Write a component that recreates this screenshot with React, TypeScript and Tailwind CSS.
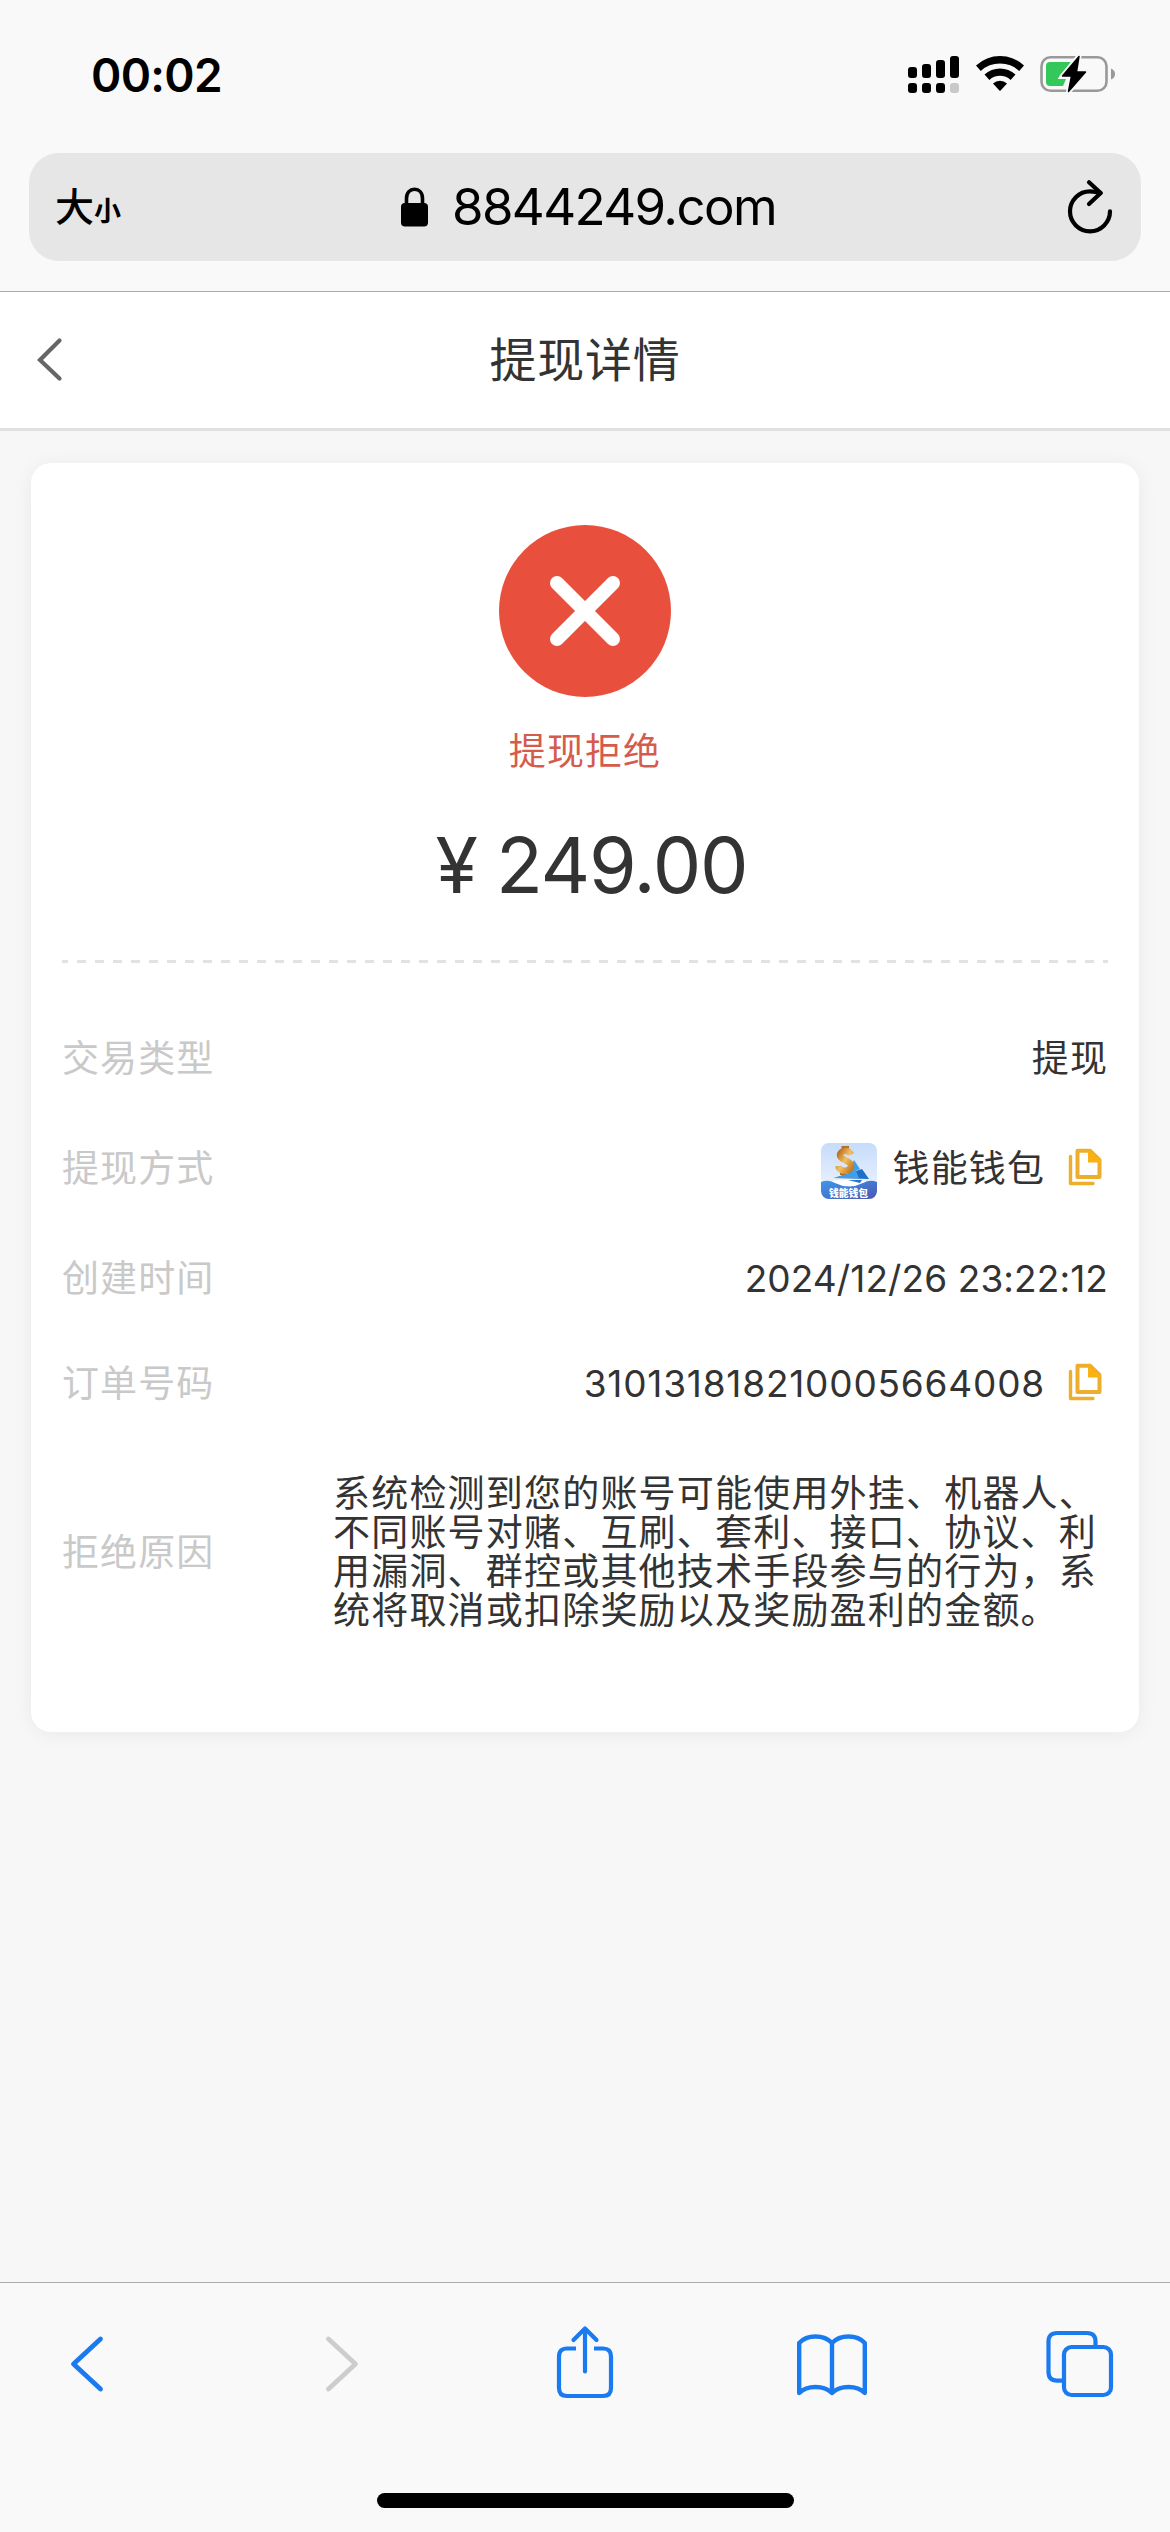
import type { ReactNode } from "react";

function StatusBar() {
  return (
    <div className="flex h-[153px] items-start justify-between pr-[54px] pl-[91px]">
      <div className="mt-[50px] text-[46px] leading-[50px] font-semibold tracking-[-0.700px] text-black">00:02</div>
      <div className="mt-[54px] flex items-start">
        <svg width="52" height="40" viewBox="0 0 52 40" className="mr-[15px]">
          <rect x="0" y="13" width="9" height="11" rx="3" />
          <rect x="14" y="10" width="9" height="14" rx="3" />
          <rect x="28" y="6" width="9" height="18" rx="3" />
          <rect x="42" y="2" width="9" height="22" rx="3" />
          <rect x="0" y="29" width="9" height="10" rx="3" />
          <rect x="14" y="29" width="9" height="10" rx="3" />
          <rect x="28" y="29" width="9" height="10" rx="3" />
          <rect x="42" y="29" width="9" height="10" rx="3" fill="#c8c8c8" />
        </svg>
        <svg width="50" height="40" viewBox="0 0 50 40" className="mr-[15px]">
          <path d="M1 11.5A35 35 0 0 1 49 11.5L44.2 17A28 28 0 0 0 5.8 17Z" strokeLinejoin="round" />
          <path d="M9.5 20.5A23 23 0 0 1 40.5 20.5L35.6 26A15.500 15.500 0 0 0 14.400 26Z" />
          <path d="M18 29.500A10.500 10.500 0 0 1 32 29.500L25.600 36.400Q25 37 24.400 36.400Z" />
        </svg>
        <svg width="76" height="40" viewBox="0 0 76 40">
          <rect x="1.500" y="3.300" width="65" height="33.500" rx="9" fill="none" stroke="#999" strokeWidth="2.600" />
          <path d="M71 14.500Q75 16 75 20T71 25.500Z" fill="#999" />
          <path d="M10 8H31L17.500 25H26L23 32H10Q6 32 6 28V12Q6 8 10 8Z" fill="#34c759" />
          <path d="M39 2L22 22.500H31.500L28.500 38L46 17.500H36.500Z" fill="#000" stroke="#f9f9f9" strokeWidth="5" strokeLinejoin="round" />
          <path d="M39 2.500L22.500 22H31.500L28.500 37.500L45.500 18H36.500Z" stroke="#000" strokeWidth="1.500" strokeLinejoin="round" />
        </svg>
      </div>
    </div>
  );
}

function AddressBar() {
  return (
    <div className="flex h-[138px] items-start px-[29px]">
      <div className="flex h-[108px] w-full items-center justify-between rounded-[30px] bg-[#e6e6e6] text-black">
        <div className="flex w-[160px] items-baseline pt-[5px] pl-[26px]">
          <span className="text-[39px] leading-[52px] font-medium">大</span>
          <span className="text-[27px] leading-[52px] font-bold">小</span>
        </div>
        <div className="flex items-center pl-[7px]">
          <svg width="28" height="40" viewBox="0 0 28 40" className="mr-[23px]">
            <rect x="0" y="16" width="27" height="23.500" rx="4" />
            <path d="M5.500 18V11.500C5.500 5.500 9 2.300 13.500 2.300S21.500 5.500 21.500 11.500V18" fill="none" stroke="#000" strokeWidth="3.600" />
          </svg>
          <span className="text-[51px] leading-[60px] tracking-[-1.600px]">8844249.com</span>
        </div>
        <div className="flex w-[160px] justify-end pr-[27px]">
          <svg width="48" height="56" viewBox="0 0 48 56" fill="none" stroke="#000" strokeWidth="4.200" strokeLinecap="round" strokeLinejoin="round">
            <path d="M44 32.300A20 20 0 1 1 24 12.300Q29 12.300 34.500 14" />
            <path d="M23 3.300L34.700 14L23 25" />
          </svg>
        </div>
      </div>
    </div>
  );
}

function PageHeader() {
  return (
    <header className="grid h-[140px] grid-cols-[1fr_auto_1fr] items-center border-t border-b-[3px] border-t-[#ababab] border-b-[#e1e1e1] bg-white">
      <svg width="28" height="46" viewBox="0 0 28 46" className="ml-[36px]" fill="none" stroke="#666" strokeWidth="4.200" strokeLinecap="round">
        <path d="M23.500 3.500L4 23L23.500 41.500" />
      </svg>
      <h1 className="text-[47px] leading-[60px] tracking-[0.7px] text-[#333]">提现详情</h1>
    </header>
  );
}

function CopyIcon() {
  return (
    <svg width="36" height="40" viewBox="0 0 36 40" className="mr-[5px] mb-[3px] ml-[22px] shrink-0" fill="none">
      <path d="M3.500 9.500V36.500H26" stroke="#ecae2c" strokeWidth="3.400" strokeLinecap="round" strokeLinejoin="round" />
      <path d="M10.500 3.700H23L32.500 13V30H10.500Z" stroke="#ecae2c" strokeWidth="4" strokeLinejoin="round" />
      <path d="M21 2.500L34 14.500V15.500H21Z" fill="#fbb013" />
    </svg>
  );
}

function WalletLogo() {
  return (
    <svg width="56" height="56" viewBox="0 0 56 56" className="mt-[5px] mr-[16px] shrink-0">
      <defs>
        <linearGradient id="sky" x1="0" y1="0" x2="0" y2="1">
          <stop offset="0" stopColor="#c5dcfa" />
          <stop offset="1" stopColor="#f4f8ff" />
        </linearGradient>
        <linearGradient id="sea" x1="0" y1="0" x2="1" y2="1">
          <stop offset="0" stopColor="#3d97ea" />
          <stop offset="1" stopColor="#4c56b4" />
        </linearGradient>
        <linearGradient id="gold" x1="0" y1="0" x2="1" y2="1">
          <stop offset="0" stopColor="#b96a1c" />
          <stop offset="0.500" stopColor="#f3bf62" />
          <stop offset="1" stopColor="#c57a22" />
        </linearGradient>
        <clipPath id="tile">
          <rect width="56" height="56" rx="8" />
        </clipPath>
      </defs>
      <g clipPath="url(#tile)">
        <rect width="56" height="56" fill="url(#sky)" />
        <path d="M33 17L39 26L27 31Z" fill="#3fa0e6" />
        <path d="M13 35L41 26L48 36Z" fill="#1f6fca" />
        <path d="M13 35L35 28L38 35Z" fill="#3fa0e6" />
        <path d="M4 39Q28 34 52 39L40 43H16Z" fill="#fff" />
        <path d="M27 37H41L39 40Z" fill="#2b74c9" />
        <path d="M0 39Q7 36 14 40Q28 47 42 40Q49 36 56 39V56H0Z" fill="url(#sea)" />
        <path d="M20.500 3H28V8H20.500ZM19 26H25V32H19Z" fill="#b56c24" />
        <path d="M30 11.500C28 6.500 19.500 7 19 12C18.500 17.500 30.500 17 30 23C29.500 29 18 29.500 17.500 23" fill="none" stroke="url(#gold)" strokeWidth="6.500" />
        <text x="27.500" y="53.500" textAnchor="middle" fontSize="9.800" fontWeight="900" fill="#fff">钱能钱包</text>
      </g>
    </svg>
  );
}

function Row({ label, height, children }: { label: string; height: string; children: ReactNode }) {
  return (
    <div className={`flex items-center justify-between ${height}`}>
      <div className="shrink-0 tracking-[1.1px] text-[#c9c9c9]">{label}</div>
      <div className="flex items-center text-[#333]">{children}</div>
    </div>
  );
}

function DetailCard() {
  return (
    <section className="mx-[31px] mt-[32px] flex h-[1269px] flex-col rounded-[20px] bg-white px-[31px] text-[37px] leading-[39px] shadow-[0_2px_20px_rgba(0,0,0,0.06)]">
      <div className="flex h-[497px] flex-col items-center pt-[62px]">
        <svg width="172" height="172" viewBox="0 0 172 172">
          <circle cx="86" cy="86" r="86" fill="#e94f3d" />
          <path d="M58 58L114 114M114 58L58 114" stroke="#fff" strokeWidth="14" strokeLinecap="round" />
        </svg>
        <div className="mt-[35px] tracking-[1.1px] text-[#d55c4c]">提现拒绝</div>
        <div className="mt-[44px] ml-[13px] flex items-center text-[77px] leading-[100px] text-[#333]">
          <span>¥</span>
          <span className="ml-[18px] tracking-[-1.200px]">249.00</span>
        </div>
      </div>
      <div className="h-[3px] shrink-0 bg-[repeating-linear-gradient(90deg,#e2e2e2_0_6px,transparent_6px_15px,#e2e2e2_15px_18px)]" />
      <div className="mt-[40px] flex flex-col">
        <Row label="交易类型" height="h-[110px]">
          <span className="tracking-[1.1px]">提现</span>
        </Row>
        <Row label="提现方式" height="h-[111px]">
          <WalletLogo />
          <span className="tracking-[1.1px]">钱能钱包</span>
          <CopyIcon />
        </Row>
        <Row label="创建时间" height="h-[109px]">
          <span className="tracking-[0.100px]">2024/12/26 23:22:12</span>
        </Row>
        <Row label="订单号码" height="h-[100px]">
          <span className="tracking-[0.800px]">310131818210005664008</span>
          <CopyIcon />
        </Row>
        <Row label="拒绝原因" height="h-[238px]">
          <p className="w-[775px] tracking-[1.200px]">
            系统检测到您的账号可能使用外挂、机器人、
            <br />
            不同账号对赌、互刷、套利、接口、协议、利
            <br />
            用漏洞、群控或其他技术手段参与的行为，系
            <br />
            统将取消或扣除奖励以及奖励盈利的金额。
          </p>
        </Row>
      </div>
    </section>
  );
}

function Toolbar() {
  return (
    <nav className="flex h-[250px] flex-col items-center justify-between border-t border-[#ababab] bg-[#f9f9f9] pb-[24px]">
      <div className="mt-[42px] flex w-full items-center pl-[69px]">
        <svg width="36" height="76" viewBox="0 0 36 76" fill="none" stroke="#1a7af0" strokeWidth="4.800" strokeLinecap="round" strokeLinejoin="round">
          <path d="M31.500 14L4.500 39L31.500 64" />
        </svg>
        <svg width="36" height="76" viewBox="0 0 36 76" className="ml-[219px]" fill="none" stroke="#cdcdcd" strokeWidth="4.800" strokeLinecap="round" strokeLinejoin="round">
          <path d="M4.500 14L31.500 39L4.500 64" />
        </svg>
        <svg width="60" height="76" viewBox="0 0 60 76" className="ml-[195px]" fill="none" stroke="#1a7af0" strokeWidth="4.200" strokeLinecap="round" strokeLinejoin="round">
          <path d="M21 23.500H12Q4 23.500 4 31.500V63Q4 71 12 71H48Q56 71 56 63V31.500Q56 23.500 48 23.500H39" strokeLinecap="butt" />
          <path d="M30 3.500V46.500M18.500 15L30 3.500L41.500 15" />
        </svg>
        <svg width="74" height="76" viewBox="0 0 74 76" className="ml-[180px]" fill="none" stroke="#1a7af0" strokeWidth="4.400" strokeLinecap="round" strokeLinejoin="round">
          <path d="M37 18Q31 11.500 20.500 11.500Q10 11.500 4.200 18V68Q10 62 20.500 62Q31 62 37 68Q43 62 53.500 62Q64 62 69.800 68V18Q64 11.500 53.500 11.500Q43 11.500 37 18ZM37 18V68" />
        </svg>
        <svg width="70" height="76" viewBox="0 0 70 76" className="ml-[175px]" fill="none" stroke="#1a7af0" strokeWidth="4.200">
          <path d="M19 55.600H13Q4.500 55.600 4.500 47V16.500Q4.500 8 13 8H43Q51.500 8 51.500 16.500V22" />
          <rect x="20" y="22" width="47" height="48" rx="7.500" />
        </svg>
      </div>
      <div className="h-[15px] w-[417px] rounded-full bg-black" />
    </nav>
  );
}

export default function App() {
  return (
    <div className="flex h-[2532px] w-[1170px] flex-col overflow-hidden bg-[#f7f7f7] font-['Inter','Noto_Sans_CJK_SC',sans-serif]">
      <div className="bg-[#f9f9f9]">
        <StatusBar />
        <AddressBar />
      </div>
      <PageHeader />
      <main className="flex-1">
        <DetailCard />
      </main>
      <Toolbar />
    </div>
  );
}
